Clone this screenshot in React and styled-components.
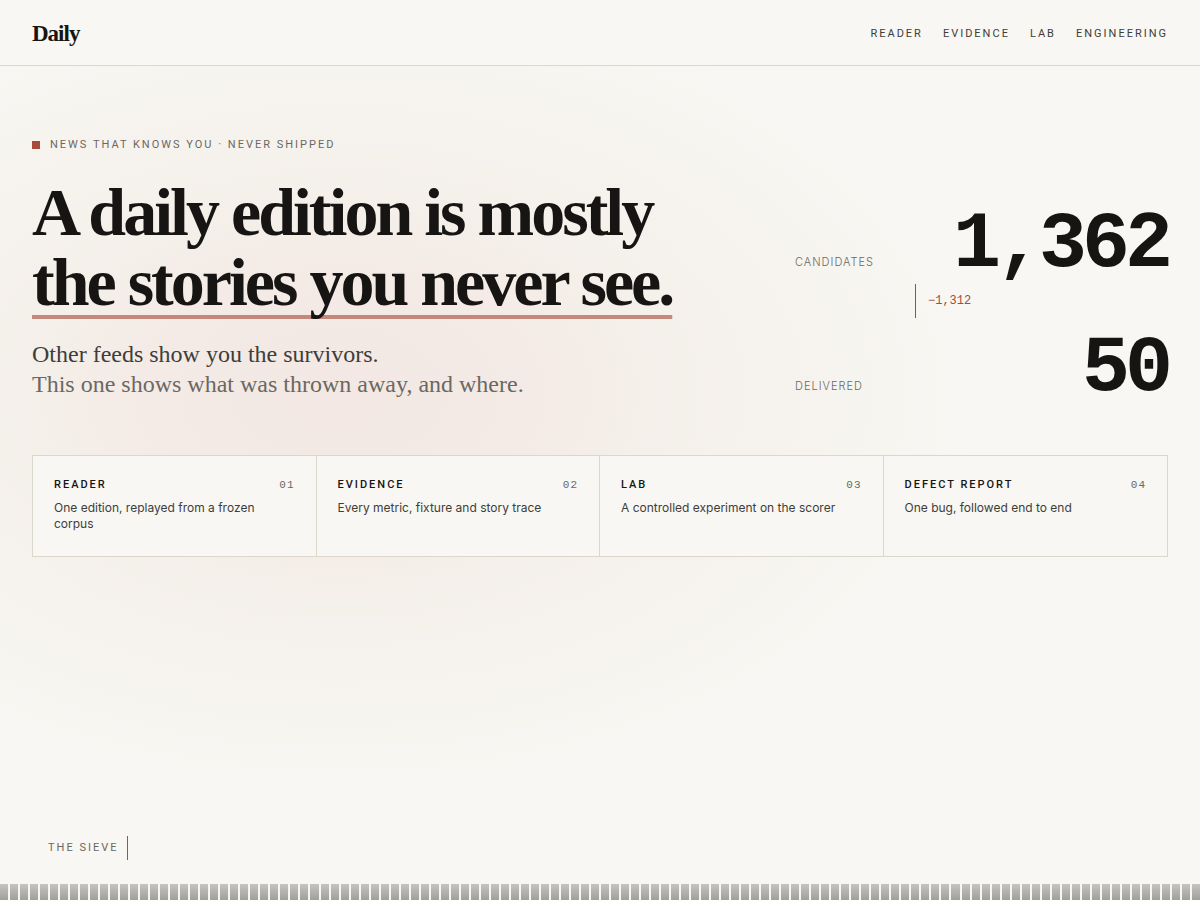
import React from "react";
import styled, { createGlobalStyle } from "styled-components";

const colors = {
  paper: "#f8f7f3",
  ink: "#161513",
  body: "#3f3d39",
  muted: "#6b6862",
  rule: "#dbd7ca",
  accent: "#a84a38",
};

const sans = `Inter, "Liberation Sans", sans-serif`;
const label = `Roboto, "Liberation Sans", sans-serif`;
const serif = `"Liberation Serif", "Times New Roman", serif`;
const mono = `"Liberation Mono", "Courier New", monospace`;

const nav = ["Reader", "Evidence", "Lab", "Engineering"];

const cards = [
  { title: "Reader", text: "One edition, replayed from a frozen corpus" },
  { title: "Evidence", text: "Every metric, fixture and story trace" },
  { title: "Lab", text: "A controlled experiment on the scorer" },
  { title: "Defect report", text: "One bug, followed end to end" },
];

const bars = Array.from({ length: 120 }, (_, i) => i);

const App = () => (
  <Page>
    <GlobalStyle />
    <Header>
      <Brand href="#top">Daily</Brand>
      <Nav>
        {nav.map((name) => (
          <NavLink key={name} href={`#${name.toLowerCase()}`}>
            {name}
          </NavLink>
        ))}
      </Nav>
    </Header>
    <Main>
      <Hero>
        <div>
          <Eyebrow>News that knows you · never shipped</Eyebrow>
          <Title>
            A daily edition is mostly
            <br />
            <Underlined>the stories you never see.</Underlined>
          </Title>
          <Lead>
            <strong>Other feeds show you the survivors.</strong>
            <br />
            This one shows what was thrown away, and where.
          </Lead>
        </div>
        <Metrics>
          <Metric>
            <dt>Candidates</dt>
            <dd>1,362</dd>
          </Metric>
          <Drop>−1,312</Drop>
          <Metric>
            <dt>Delivered</dt>
            <dd>50</dd>
          </Metric>
        </Metrics>
      </Hero>
      <Cards>
        {cards.map((card, i) => (
          <Card key={card.title} href={`#card-${i + 1}`}>
            <CardHead>
              <CardTitle>{card.title}</CardTitle>
              <CardNumber>0{i + 1}</CardNumber>
            </CardHead>
            <CardText>{card.text}</CardText>
          </Card>
        ))}
      </Cards>
    </Main>
    <SieveLabel>The sieve</SieveLabel>
    <Sieve aria-hidden="true">
      {bars.map((i) => (
        <Bar key={i} />
      ))}
    </Sieve>
  </Page>
);

const GlobalStyle = createGlobalStyle`
  * {
    box-sizing: border-box;
  }

  body {
    margin: 0;
    background: ${colors.paper};
    color: ${colors.ink};
    font-family: ${sans};
  }

  a {
    color: inherit;
    text-decoration: none;
  }
`;

const Page = styled.div`
  display: flex;
  flex-direction: column;
  min-height: 100vh;
  background: radial-gradient(
    ellipse 640px 400px at 340px 394px,
    #f3e8e3 0%,
    #f4ebe6 32%,
    #f4efe9 46%,
    #f6f3ee 72%,
    ${colors.paper} 100%
  );
`;

const Header = styled.header`
  display: flex;
  align-items: center;
  justify-content: space-between;
  height: 66px;
  padding: 2px 32px 0;
  background: ${colors.paper};
  border-bottom: 1px solid ${colors.rule};
`;

const Brand = styled.a`
  font: bold 23px/32px ${serif};
  letter-spacing: -1px;
`;

const Nav = styled.nav`
  display: flex;
  gap: 20px;
`;

const NavLink = styled.a`
  color: ${colors.body};
  font-family: ${label};
  font-size: 11px;
  line-height: 16px;
  letter-spacing: 2px;
  text-transform: uppercase;
`;

const Main = styled.main`
  flex: 1;
  padding: 71px 32px 40px;
`;

const Hero = styled.section`
  display: grid;
  grid-template-columns: minmax(0, 1fr) 373px;
  align-items: end;
  gap: 64px;
`;

const Eyebrow = styled.p`
  display: flex;
  align-items: center;
  gap: 10px;
  margin: 0;
  color: ${colors.muted};
  font-family: ${label};
  font-size: 11px;
  line-height: 16px;
  letter-spacing: 2px;
  text-transform: uppercase;

  &::before {
    content: "";
    width: 8px;
    height: 8px;
    background: ${colors.accent};
  }
`;

const Title = styled.h1`
  margin: 24px 0 0;
  font: bold 68px/70px ${serif};
  letter-spacing: -3px;
  white-space: nowrap;
`;

const Underlined = styled.span`
  text-decoration: underline 4px rgba(168, 74, 56, 0.62);
  text-decoration-skip-ink: none;
  text-underline-offset: 10px;
`;

const Lead = styled.p`
  margin: 22px 0 0;
  color: ${colors.muted};
  font: 24px/30px ${serif};

  strong {
    color: ${colors.body};
    font-weight: 400;
  }
`;

const Metrics = styled.dl`
  margin: 0;
`;

const Metric = styled.div`
  display: flex;
  align-items: baseline;
  justify-content: space-between;

  dt {
    color: ${colors.muted};
    font-size: 11px;
    font-weight: 300;
    letter-spacing: 1px;
    text-transform: uppercase;
  }

  dd {
    margin: 0;
    font: bold 80px/60px ${mono};
    letter-spacing: -5px;
  }
`;

const Drop = styled.div`
  width: max-content;
  margin: 9px 0 21px 120px;
  padding-left: 12px;
  border-left: 1px solid ${colors.accent};
  color: ${colors.accent};
  font: 12px/34px ${mono};
`;

const Cards = styled.section`
  display: grid;
  grid-template-columns: repeat(4, 1fr);
  margin-top: 56px;
  border: 1px solid ${colors.rule};
  background: ${colors.paper};
`;

const Card = styled.a`
  padding: 21px 21px 24px;

  &:not(:last-child) {
    border-right: 1px solid ${colors.rule};
  }
`;

const CardHead = styled.div`
  display: flex;
  justify-content: space-between;
  line-height: 16px;
`;

const CardTitle = styled.span`
  font-family: ${label};
  font-size: 11px;
  font-weight: 500;
  letter-spacing: 2px;
  text-transform: uppercase;
`;

const CardNumber = styled.span`
  color: ${colors.muted};
  font-family: ${mono};
  font-size: 11px;
  letter-spacing: 1px;
`;

const CardText = styled.p`
  margin: 7px 0 0;
  color: ${colors.body};
  font-size: 12px;
  line-height: 16px;
`;

const SieveLabel = styled.h2`
  display: flex;
  align-self: flex-start;
  margin: 0 0 24px 48px;
  padding-right: 9px;
  border-right: 1px solid ${colors.muted};
  color: ${colors.muted};
  font-family: ${label};
  font-size: 11px;
  font-weight: 400;
  line-height: 24px;
  letter-spacing: 2px;
  text-transform: uppercase;
`;

const Sieve = styled.div`
  display: flex;
  gap: 2px;
  height: 16px;
`;

const Bar = styled.span`
  flex: 1;
  background: linear-gradient(#c5c4c0, #a09f9b);
`;

export default App;
